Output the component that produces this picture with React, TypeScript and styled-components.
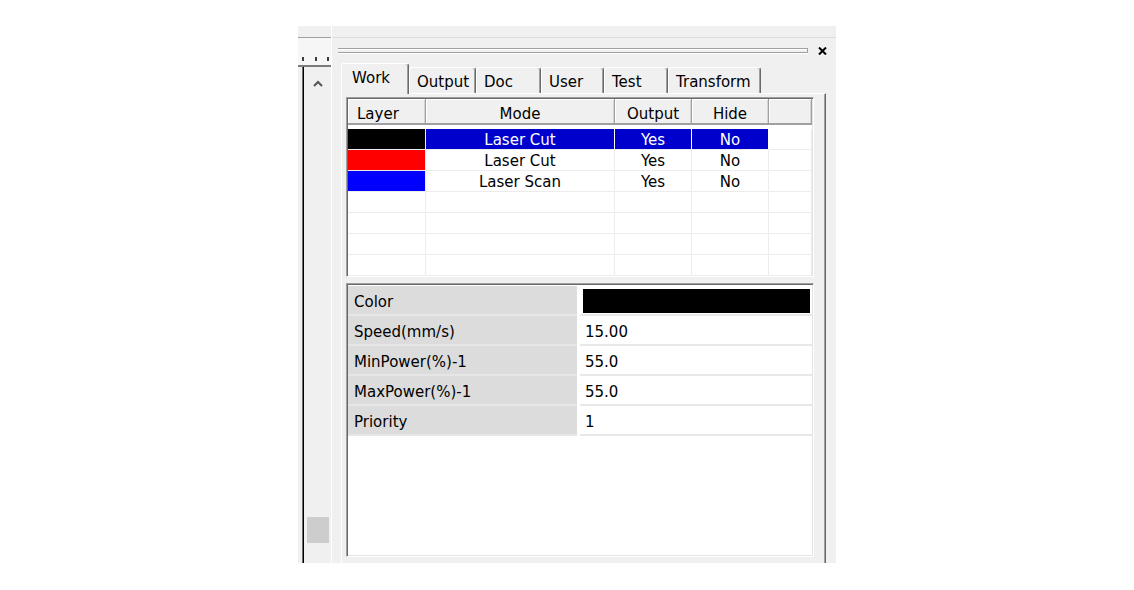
import styled, { createGlobalStyle } from 'styled-components';

const GlobalStyle = createGlobalStyle`
  html, body {
    margin: 0;
    padding: 0;
    background: #fff;
  }
  body {
    font-family: "DejaVu Sans", Verdana, sans-serif;
    font-size: 15px;
    color: #000;
  }
`;

const Page = styled.div`
  padding: 26px 0 0 298px;
`;

const Frame = styled.div`
  display: flex;
  width: 538px;
  height: 537px;
  background: #f0f0f0;
  overflow: hidden;
`;

/* left ruler + scrollbar strip */
const SideStrip = styled.div`
  width: 34px;
  flex-shrink: 0;
  box-sizing: border-box;
  display: flex;
  flex-direction: column;
  padding-top: 11px;
  border-right: 1px solid #fff;
`;

const Ruler = styled.div`
  height: 30px;
  box-sizing: border-box;
  border-top: 1px solid #a0a0a0;
  border-bottom: 2px solid #7a7a7a;
  background: #f6f6f6;
  display: flex;
  align-items: flex-end;
  justify-content: space-between;
  padding: 0 2px 4px 4px;
`;

const Tick = styled.span`
  width: 2px;
  height: 4px;
  background: #3c3c3c;
`;

const ScrollArea = styled.div`
  flex: 1;
  display: flex;
`;

const Gutter = styled.div`
  width: 4px;
`;

const Rail = styled.div`
  width: 2px;
  background: #000;
  box-shadow: inset 1px 0 #6a6a6a;
`;

const Track = styled.div`
  flex: 1;
  display: flex;
  flex-direction: column;
  align-items: center;
  padding-top: 13px;
`;

const Thumb = styled.div`
  margin-top: auto;
  margin-bottom: 20px;
  width: 22px;
  height: 26px;
  background: #cdcdcd;
`;

/* main docked panel */
const MainPanel = styled.div`
  flex: 1;
  display: flex;
  flex-direction: column;
  padding: 11px 0 0 1px;
`;

const PanelBody = styled.div`
  flex: 1;
  display: flex;
  flex-direction: column;
  border-top: 1px solid #dcdcdc;
  padding-top: 9px;
`;

const HandleRow = styled.div`
  display: flex;
  align-items: center;
  height: 8px;
  padding: 0 9px 0 5px;
`;

const Handle = styled.div`
  flex: 1;
  align-self: flex-start;
  margin-top: 1px;
  height: 5px;
  box-sizing: border-box;
  border-top: 1px solid #a0a0a0;
  border-bottom: 1px solid #a0a0a0;
  border-right: 1px solid #a0a0a0;
  box-shadow: inset 0 1px #fff, 0 1px #fff;
`;

const CloseIcon = styled.svg`
  margin-left: 10px;
  flex-shrink: 0;
`;

const TabStrip = styled.div`
  display: flex;
  align-items: flex-end;
  height: 30px;
  margin-top: 8px;
  padding-left: 8px;
`;

const Tab = styled.div<{ $width: number; $active?: boolean }>`
  position: relative;
  width: ${p => p.$width}px;
  height: ${p => (p.$active ? 31 : 26)}px;
  margin-bottom: ${p => (p.$active ? -1 : 0)}px;
  z-index: ${p => (p.$active ? 1 : 0)};
  box-sizing: border-box;
  background: #f0f0f0;
  border-top: 1px solid #fff;
  border-left: 1px solid #fff;
  border-right: 1px solid #696969;
  box-shadow: inset -1px 0 #a0a0a0;
  border-radius: 3px 3px 0 0;
  padding: 5px 0 0 ${p => (p.$active ? 10 : 7)}px;
  line-height: 18px;
  white-space: nowrap;
`;

const Pane = styled.div`
  flex: 1;
  display: flex;
  flex-direction: column;
  margin: 0 10px 0 8px;
  border-top: 1px solid #fff;
  border-left: 1px solid #fff;
  border-right: 1px solid #696969;
  box-shadow: inset -1px 0 #a0a0a0;
  padding: 3px 0 0 4px;
`;

const Sunken = styled.div`
  width: 468px;
  box-sizing: border-box;
  background: #fff;
  border-top: 1px solid #a0a0a0;
  border-left: 1px solid #a0a0a0;
  border-right: 1px solid #fff;
  border-bottom: 1px solid #fff;
  box-shadow: inset 1px 1px #696969, inset -1px -1px #e3e3e3;
  padding: 1px 1px 0 1px;
`;

const LayerList = styled(Sunken)`
  height: 180px;
`;

const columns = '78px 189px 77px 77px 1fr';

const HeaderRow = styled.div`
  display: grid;
  grid-template-columns: ${columns};
  height: 26px;
`;

const HeaderCell = styled.div<{ $align?: string }>`
  box-sizing: border-box;
  background: #f0f0f0;
  border-right: 1px solid #a0a0a0;
  border-bottom: 2px solid #a0a0a0;
  box-shadow: inset 1px 1px #fff, inset -1px 0 #d4d4d4;
  display: flex;
  align-items: center;
  justify-content: ${p => p.$align || 'center'};
  padding: 6px 0 0 ${p => (p.$align ? 9 : 0)}px;
`;

const ListBody = styled.div`
  padding-top: 4px;
`;

const Row = styled.div`
  display: grid;
  grid-template-columns: ${columns};
  height: 21px;
`;

const Cell = styled.div<{ $selected?: boolean; $swatch?: string }>`
  box-sizing: border-box;
  border-bottom: 1px solid #ececec;
  border-right: 1px solid ${p => (p.$selected ? '#fff' : '#ececec')};
  background: ${p => p.$swatch || (p.$selected ? '#0000cc' : '#fff')};
  color: ${p => (p.$selected ? '#fff' : '#000')};
  display: flex;
  align-items: center;
  justify-content: center;
  padding-top: 2px;
  line-height: 18px;
`;

const PropBox = styled(Sunken)`
  flex: 1;
  margin: 6px 0 6px;
  padding-top: 2px;
`;

const PropRow = styled.div`
  display: grid;
  grid-template-columns: 229px 1fr;
  column-gap: 3px;
  height: 30px;
`;

const PropLabel = styled.div`
  box-sizing: border-box;
  background: #dcdcdc;
  border-bottom: 2px solid #e6e6e6;
  display: flex;
  align-items: center;
  padding: 3px 0 0 6px;
`;

const PropValue = styled.div`
  box-sizing: border-box;
  border-bottom: 2px solid #e8e8e8;
  display: flex;
  align-items: center;
  padding: 4px 0 0 5px;
`;

const ColorValue = styled.div<{ $color: string }>`
  box-sizing: border-box;
  border-bottom: 2px solid #e8e8e8;
  padding: 3px 2px 1px 3px;
  display: flex;

  &::before {
    content: '';
    flex: 1;
    background: ${p => p.$color};
  }
`;

const tabs = [
  { label: 'Work', width: 68, active: true },
  { label: 'Output', width: 67 },
  { label: 'Doc', width: 65 },
  { label: 'User', width: 63 },
  { label: 'Test', width: 64 },
  { label: 'Transform', width: 93 },
];

const layers = [
  { color: '#000000', mode: 'Laser Cut', output: 'Yes', hide: 'No', selected: true },
  { color: '#ff0000', mode: 'Laser Cut', output: 'Yes', hide: 'No' },
  { color: '#0000ff', mode: 'Laser Scan', output: 'Yes', hide: 'No' },
];

const props = [
  { label: 'Speed(mm/s)', value: '15.00' },
  { label: 'MinPower(%)-1', value: '55.0' },
  { label: 'MaxPower(%)-1', value: '55.0' },
  { label: 'Priority', value: '1' },
];

const App = () => {
  return (
    <Page>
      <GlobalStyle />
      <Frame>
        <SideStrip>
          <Ruler>
            <Tick />
            <Tick />
            <Tick />
          </Ruler>
          <ScrollArea>
            <Gutter />
            <Rail />
            <Track>
              <svg width="10" height="7" viewBox="0 0 10 7">
                <polyline points="1,6 5,2 9,6" fill="none" stroke="#555" strokeWidth="2" />
              </svg>
              <Thumb />
            </Track>
          </ScrollArea>
        </SideStrip>

        <MainPanel>
          <PanelBody>
            <HandleRow>
              <Handle />
              <CloseIcon width="9" height="8" viewBox="0 0 9 8">
                <path d="M1 0.5 L8 7.5 M8 0.5 L1 7.5" stroke="#000" strokeWidth="2" />
              </CloseIcon>
            </HandleRow>

            <TabStrip>
              {tabs.map(t => (
                <Tab key={t.label} $width={t.width} $active={t.active}>
                  {t.label}
                </Tab>
              ))}
            </TabStrip>

            <Pane>
              <LayerList>
                <HeaderRow>
                  <HeaderCell $align="flex-start">Layer</HeaderCell>
                  <HeaderCell>Mode</HeaderCell>
                  <HeaderCell>Output</HeaderCell>
                  <HeaderCell>Hide</HeaderCell>
                  <HeaderCell />
                </HeaderRow>
                <ListBody>
                  {layers.map((l, i) => (
                    <Row key={i}>
                      <Cell $swatch={l.color} />
                      <Cell $selected={l.selected}>{l.mode}</Cell>
                      <Cell $selected={l.selected}>{l.output}</Cell>
                      <Cell $selected={l.selected}>{l.hide}</Cell>
                      <Cell />
                    </Row>
                  ))}
                  {[0, 1, 2, 3].map(i => (
                    <Row key={'e' + i}>
                      <Cell />
                      <Cell />
                      <Cell />
                      <Cell />
                      <Cell />
                    </Row>
                  ))}
                </ListBody>
              </LayerList>

              <PropBox>
                <PropRow>
                  <PropLabel>Color</PropLabel>
                  <ColorValue $color="#000" />
                </PropRow>
                {props.map(p => (
                  <PropRow key={p.label}>
                    <PropLabel>{p.label}</PropLabel>
                    <PropValue>{p.value}</PropValue>
                  </PropRow>
                ))}
              </PropBox>
            </Pane>
          </PanelBody>
        </MainPanel>
      </Frame>
    </Page>
  );
};

export default App;
